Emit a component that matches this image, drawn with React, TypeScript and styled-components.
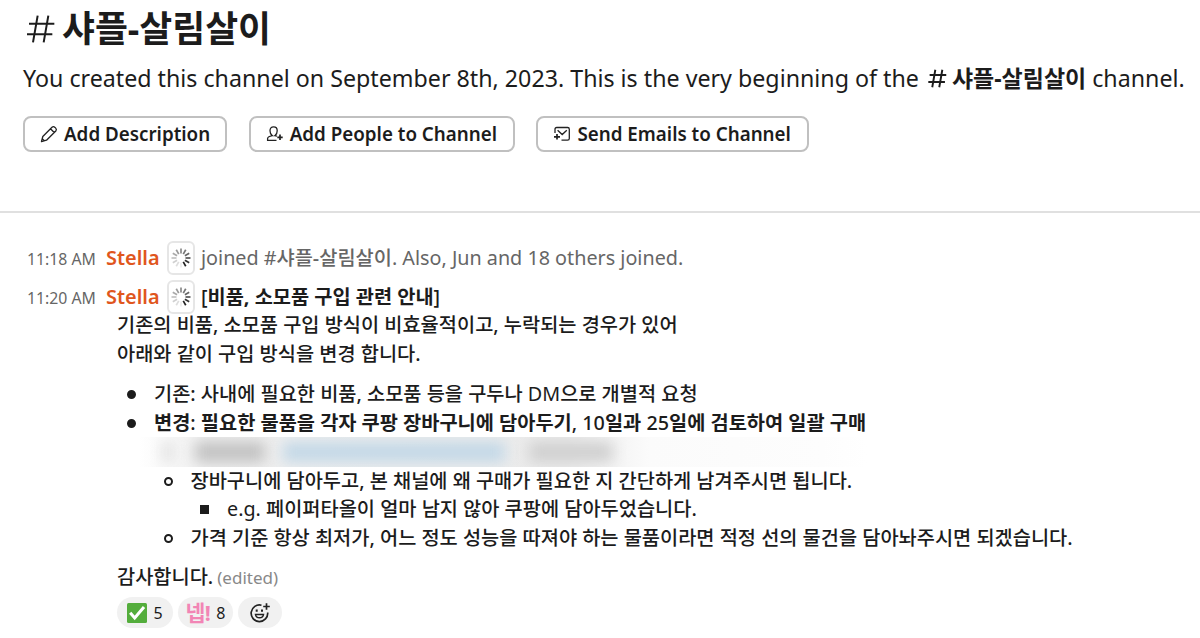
import React from 'react';
import styled, {createGlobalStyle} from 'styled-components';

export default function App() {
    return (
        <Page>
            <GlobalStyle/>
            <Intro>
                <Title>
                    <HashIcon size={32} stroke={1.5}/>
                    <TitleText>샤플-살림살이</TitleText>
                </Title>
                <Subtitle>
                    <span>You created this channel on September 8th, 2023. This is the very beginning of the</span>
                    <HashIcon size={21} stroke={2.2}/>
                    <ChannelName>샤플-살림살이</ChannelName>
                    <span>channel.</span>
                </Subtitle>
                <Actions>
                    <Button width={204}><PencilIcon/><span>Add Description</span></Button>
                    <Button width={266}><PersonIcon/><span>Add People to Channel</span></Button>
                    <Button width={273}><MailIcon/><span>Send Emails to Channel</span></Button>
                </Actions>
            </Intro>
            <Messages>
                <MessageHead height={39}>
                    <Time>11:18 AM</Time>
                    <Author>Stella</Author>
                    <Status><Spinner/></Status>
                    <Joined>joined #<Medium>샤플-살림살이</Medium>. Also, Jun and 18 others joined.</Joined>
                </MessageHead>
                <MessageHead height={32}>
                    <Time>11:20 AM</Time>
                    <Author>Stella</Author>
                    <Status><Spinner/></Status>
                    <Strong><Latin weight={500}>[</Latin>비품, 소모품 구입 관련 안내<Latin weight={500}>]</Latin></Strong>
                </MessageHead>
                <Body>
                    <Line height={29}>기존의 비품, 소모품 구입 방식이 비효율적이고, 누락되는 경우가 있어</Line>
                    <Line height={29}>아래와 같이 구입 방식을 변경 합니다.</Line>
                    <List>
                        <Item level={0} height={30}>
                            <Bullet kind="disc"/>
                            <span>기존: 사내에 필요한 비품, 소모품 등을 구두나 <Latin weight={400}>DM</Latin>으로 개별적 요청</span>
                        </Item>
                        <Item level={0} height={28}>
                            <Bullet kind="disc"/>
                            <Strong>
                                변경<Latin weight={500}>:</Latin> 필요한 물품을 각자 쿠팡 장바구니에 담아두기<Latin weight={500}>, 10</Latin>일과 <Latin weight={500}>25</Latin>일에 검토하여 일괄 구매
                            </Strong>
                        </Item>
                        <Redacted>
                            <Smudge left={10} width={10} color="#dedede"/>
                            <Smudge left={22} width={70} color="#c2c2c2"/>
                            <Smudge left={18} width={222} color="#c3d8e7"/>
                            <Smudge left={24} width={84} color="#d0d0d0"/>
                        </Redacted>
                        <Item level={1} height={28}>
                            <Bullet kind="circle"/>
                            <span>장바구니에 담아두고, 본 채널에 왜 구매가 필요한 지 간단하게 남겨주시면 됩니다.</span>
                        </Item>
                        <Item level={2} height={28}>
                            <Bullet kind="square"/>
                            <span><Latin weight={400}>e.g.</Latin> 페이퍼타올이 얼마 남지 않아 쿠팡에 담아두었습니다.</span>
                        </Item>
                        <Item level={1} height={30}>
                            <Bullet kind="circle"/>
                            <span>가격 기준 항상 최저가, 어느 정도 성능을 따져야 하는 물품이라면 적정 선의 물건을 담아놔주시면 되겠습니다.</span>
                        </Item>
                    </List>
                    <Line height={30}>감사합니다.<Edited>(edited)</Edited></Line>
                    <Reactions>
                        <Reaction width={56}><CheckIcon/>5</Reaction>
                        <Reaction width={55}><Yep>넵!</Yep>8</Reaction>
                        <Reaction width={44}><SmileIcon/></Reaction>
                    </Reactions>
                </Body>
            </Messages>
        </Page>
    );
}

const HashIcon = ({size, stroke}: {size: number, stroke: number}) => (
    <svg width={size} height={size} viewBox="0 0 24 24" fill="none" stroke="#1c1c1c" strokeWidth={stroke}>
        <path d="M9.5 2 6 22M17.5 2 14 22M3 8h19M1.5 16h19"/>
    </svg>
);

const PencilIcon = () => (
    <svg width="18" height="18" viewBox="0 0 18 18" fill="none" stroke="#222" strokeWidth="1.3" strokeLinejoin="round">
        <path d="M1.5 16.5 2.8 11.5 12 2.2Q13.5 1 15 2.4L15.7 3.1Q17 4.5 15.8 6L6.5 15.2ZM10.5 3.8 14.2 7.5M2.3 13.8 4.3 15.7"/>
    </svg>
);

const PersonIcon = () => (
    <svg width="18" height="18" viewBox="0 0 18 18" fill="none" stroke="#222" strokeWidth="1.3">
        <path d="M10.5 15.3H1.6V13.5Q1.6 11.6 6.2 10.6Q4 9 4 5.7Q4 1.9 7.6 1.9Q11.2 1.9 11.2 5.7Q11.2 9 9 10.6L11 11.1"/>
        <path d="M14 9.6v5.4M11.3 12.3h5.4" strokeWidth="1.7"/>
    </svg>
);

const MailIcon = () => (
    <svg width="18" height="18" viewBox="0 0 18 18" fill="none" stroke="#222" strokeWidth="1.3">
        <path d="M2 8V4.2Q2 2.5 3.7 2.5H14.6Q16.3 2.5 16.3 4.2V13.5Q16.3 15.2 14.6 15.2H8.5M4.6 5.2 9.2 9.5 13.8 5.2"/>
        <path d="M1 11.8h6M4 9v5.6" strokeWidth="1.7"/>
    </svg>
);

const SPOKES = ['#8a8a8a', '#777', '#666', '#555', '#333', '#222', '#eee', '#ddd', '#d0d0d0', '#c2c2c2', '#aaa', '#999'];

const Spinner = () => (
    <svg width="20" height="20" viewBox="-10 -10 20 20" strokeWidth="1.7">
        {SPOKES.map((color, i) => (
            <path
                key={i}
                d="M0-4.5V-9.5"
                stroke={color}
                transform={`rotate(${i * 30})`}
            />
        ))}
    </svg>
);

const CheckIcon = () => (
    <svg width="20" height="20" viewBox="0 0 20 20">
        <rect width="20" height="20" rx="1.5" fill="#54ad3c"/>
        <path d="M3.2 9.8 7.7 15 17 4" fill="none" stroke="#fff" strokeWidth="3"/>
    </svg>
);

const SmileIcon = () => (
    <svg width="22" height="22" viewBox="0 0 22 22" fill="none" stroke="#222" strokeWidth="1.7">
        <path d="M12.5 3.2A8.3 8.3 0 1 0 18.7 10.5M17.5 1.2v6.6M14.2 4.5h6.6"/>
        <path d="M6.5 12.5h8Q14 15.8 10.5 15.8T6.5 12.5Z" strokeWidth="1.5"/>
        <path d="M7.7 7.5v2.2M13 7.5v2.2" strokeWidth="2"/>
    </svg>
);

const GlobalStyle = createGlobalStyle`
  body {
    margin: 0;
    background-color: #fff;
  }

  * {
    box-sizing: border-box;
  }
`

const Page = styled.main`
  width: 1200px;
  height: 638px;
  overflow: hidden;
  color: #1c1c1c;
  font-family: "Noto Sans", "Noto Sans CJK KR", sans-serif;
  font-size: 19.75px;
  white-space: nowrap;
`

const Intro = styled.header`
  height: 213px;
  padding: 6px 0 0 23px;
  border-bottom: 2px solid #e0e0e0;
`

const Title = styled.h1`
  display: flex;
  align-items: center;
  gap: 5px;
  height: 46px;
  margin: 0;
  padding-left: 2px;
  line-height: 44px;
`

const TitleText = styled.span`
  height: 46px;
  font-size: 35.8px;
  font-weight: 700;
`

const Subtitle = styled.div`
  display: flex;
  align-items: center;
  height: 53px;
  font-size: 23.23px;
  line-height: 53px;

  svg {
    margin: 0 4px 0 8px;
  }
`

const ChannelName = styled.b`
  margin-right: 6px;
  font-size: 23px;
`

const Actions = styled.div`
  display: flex;
  gap: 21.7px;
  margin-top: 11px;
`

const Button = styled.button<{width: number}>`
  display: flex;
  align-items: center;
  gap: 6px;
  width: ${({width}) => width}px;
  height: 36px;
  padding: 0 0 0 15px;
  border: 2px solid #c0c0c0;
  border-radius: 8px;
  background-color: #fff;
  color: #1c1c1c;
  font: 600 18.8px "Noto Sans", sans-serif;
  white-space: nowrap;
`

const Messages = styled.section`
  padding: 26px 0 0 27px;
`

const MessageHead = styled.div<{height: number}>`
  display: flex;
  height: ${({height}) => height}px;
  line-height: 38px;
`

const Time = styled.span`
  width: 79px;
  color: #666;
  font-size: 15.8px;
  line-height: 40px;
`

const Author = styled.span`
  width: 60px;
  color: #e0561d;
  font-size: 19.9px;
  font-weight: 650;
`

const Status = styled.span`
  display: flex;
  align-items: center;
  justify-content: center;
  width: 28px;
  height: 34px;
  margin: 2px 6px 0 1px;
  border: 2px solid #e6e6e6;
  border-radius: 6px;
`

const Joined = styled.span`
  color: #666;
`

const Medium = styled.span`
  font-weight: 500;
`

const Strong = styled.b`
  font-weight: 700;
`

const Latin = styled.span<{weight: number}>`
  font-weight: ${({weight}) => weight};
`

const Body = styled.div`
  padding-left: 90px;
`

const Line = styled.div<{height: number}>`
  height: ${({height}) => height}px;
  font-weight: 500;
  line-height: ${({height}) => height}px;
`

const List = styled.div`
  margin: 11px 0 9px;
`

const Item = styled.div<{level: number, height: number}>`
  display: flex;
  align-items: center;
  height: ${({height}) => height}px;
  padding-left: ${({level}) => 9 + level * 36.5}px;
  font-weight: 500;
  line-height: ${({height}) => height}px;
`

const Bullet = styled.i<{kind: 'disc' | 'circle' | 'square'}>`
  flex: none;
  width: 9px;
  height: 9px;
  margin: 1px 18px 0 1px;
  border: 2px solid #1c1c1c;
  border-radius: ${({kind}) => kind === 'square' ? 0 : 5}px;
  background-color: ${({kind}) => kind === 'circle' ? 'transparent' : '#1c1c1c'};
`

const Redacted = styled.div`
  display: flex;
  align-items: center;
  width: 750px;
  height: 30px;
  padding-left: 36px;
  overflow: hidden;
  background: linear-gradient(90deg, #fff 3%, #efefef 12%, #ebebeb 60%, #fbfbfb 71%, #fdfdfd 94%, #fff);
`

const Smudge = styled.i<{left: number, width: number, color: string}>`
  width: ${({width}) => width}px;
  height: 20px;
  margin-left: ${({left}) => left}px;
  background-color: ${({color}) => color};
  filter: blur(7px);
`

const Edited = styled.span`
  margin-left: 4px;
  color: #888;
  font-size: 17px;
  font-weight: 400;
`

const Reactions = styled.div`
  display: flex;
  gap: 5px;
  margin-top: 5px;
`

const Reaction = styled.span<{width: number}>`
  display: flex;
  align-items: center;
  justify-content: center;
  gap: 6px;
  width: ${({width}) => width}px;
  height: 31px;
  border-radius: 16px;
  background-color: #f1f1f1;
  font-size: 16px;
`

const Yep = styled.b`
  color: #f285b5;
  font-size: 21.5px;
  line-height: 28px;
  letter-spacing: -0.5px;
`
